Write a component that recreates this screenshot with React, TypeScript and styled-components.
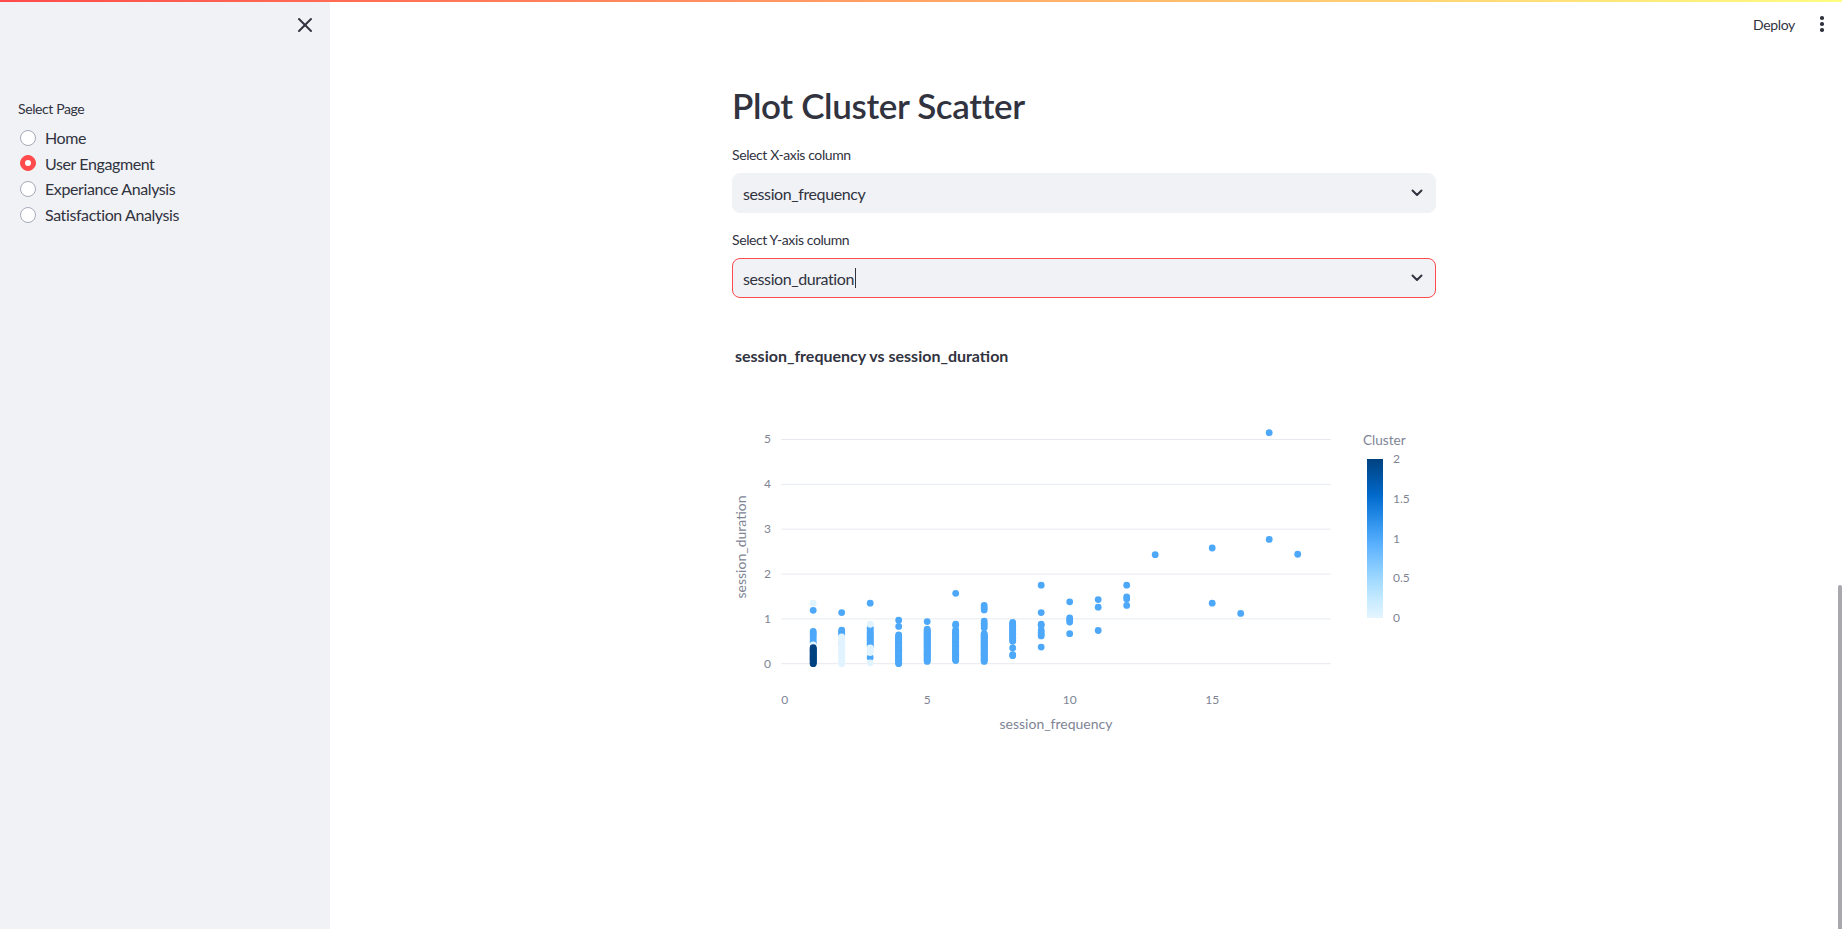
import React from "react";
import styled, { createGlobalStyle } from "styled-components";
import { X } from "lucide-react";

const FONT = `"Source Sans Pro", "Lato", "Noto Sans", sans-serif`;
const TEXT = "#31333f";
const MUTED = "#808495";
const GRID = "#e6eaf1";

const GlobalStyle = createGlobalStyle`
  html, body {
    margin: 0;
    padding: 0;
    background: #ffffff;
    font-family: ${FONT};
    color: ${TEXT};
    letter-spacing: -0.025em;
    overflow: hidden;
  }
  * {
    box-sizing: border-box;
  }
`;

const Page = styled.div`
  display: flex;
  flex-direction: column;
  width: 100vw;
  height: 100vh;
`;

const TopDecoration = styled.div`
  height: 2px;
  flex: 0 0 2px;
  background: linear-gradient(90deg, rgb(255, 75, 75), rgb(255, 253, 128));
`;

const Body = styled.div`
  flex: 1;
  display: flex;
  min-height: 0;
`;

const Sidebar = styled.aside`
  width: 330px;
  flex: 0 0 330px;
  background: #f0f2f6;
  display: flex;
  flex-direction: column;
  padding: 11px 13px 0 18px;
`;

const SidebarHeader = styled.div`
  display: flex;
  justify-content: flex-end;
  height: 24px;
`;

const CloseButton = styled.button`
  display: flex;
  align-items: center;
  justify-content: center;
  width: 24px;
  height: 24px;
  padding: 0;
  border: none;
  background: transparent;
  color: ${TEXT};
  cursor: pointer;
`;

const SidebarLabel = styled.div`
  margin-top: 61px;
  font-size: 14px;
  line-height: 22px;
  color: ${TEXT};
`;

const RadioList = styled.div`
  display: flex;
  flex-direction: column;
  margin-top: 5px;
`;

const RadioRow = styled.label`
  display: flex;
  align-items: center;
  height: 25.6px;
  gap: 9px;
  padding-left: 2px;
  font-size: 16px;
  color: ${TEXT};
  cursor: pointer;
`;

const RadioCircle = styled.span<{ $checked?: boolean }>`
  position: relative;
  width: 16px;
  height: 16px;
  flex: 0 0 16px;
  border-radius: 50%;
  background: ${({ $checked }) => ($checked ? "#ff4b4b" : "#ffffff")};
  border: 1px solid ${({ $checked }) => ($checked ? "#ff4b4b" : "#a6aab8")};

  &::after {
    content: "";
    display: ${({ $checked }) => ($checked ? "block" : "none")};
    position: absolute;
    left: 50%;
    top: 50%;
    width: 6px;
    height: 6px;
    margin: -3px 0 0 -3px;
    border-radius: 50%;
    background: #ffffff;
  }
`;

const Main = styled.main`
  position: relative;
  flex: 1;
  display: flex;
  flex-direction: column;
  padding-right: 4px;
`;

const MainHeader = styled.header`
  height: 44px;
  display: flex;
  align-items: center;
  justify-content: flex-end;
  gap: 23px;
  padding-right: 12px;
`;

const DeployButton = styled.button`
  border: none;
  background: transparent;
  padding: 0;
  font-family: ${FONT};
  font-size: 14px;
  letter-spacing: -0.025em;
  color: ${TEXT};
  cursor: pointer;
`;

const MenuButton = styled.button`
  display: flex;
  flex-direction: column;
  align-items: center;
  gap: 2.6px;
  width: 8px;
  border: none;
  background: transparent;
  padding: 0;
  cursor: pointer;

  span {
    width: 3.6px;
    height: 3.6px;
    border-radius: 50%;
    background: ${TEXT};
  }
`;

const Content = styled.section`
  width: 704px;
  margin: 0 auto;
  padding-top: 33px;
  display: flex;
  flex-direction: column;
`;

const Title = styled.h1`
  margin: 0 0 12px;
  font-size: 35px;
  line-height: 53px;
  font-weight: 600;
  letter-spacing: -0.01em;
  color: ${TEXT};
`;

const Field = styled.div`
  display: flex;
  flex-direction: column;
  margin-bottom: 16px;
`;

const FieldLabel = styled.div`
  font-size: 14px;
  line-height: 22px;
  margin-bottom: 7px;
  color: ${TEXT};
`;

const SelectBox = styled.div<{ $focused?: boolean }>`
  height: 40px;
  display: flex;
  align-items: center;
  justify-content: space-between;
  padding: 0 12px 0 10px;
  background: #f0f2f6;
  border-radius: 8px;
  border: 1px solid ${({ $focused }) => ($focused ? "#ff4b4b" : "#f0f2f6")};
  font-size: 16px;
  color: ${TEXT};
`;

const SelectValue = styled.span`
  display: flex;
  align-items: center;
`;

const Cursor = styled.span`
  display: inline-block;
  width: 1px;
  height: 20px;
  margin-left: 1px;
  background: ${TEXT};
`;

const ChartFrame = styled.div`
  width: 704px;
  height: 450px;
  letter-spacing: 0;
`;

const ScrollThumb = styled.div`
  position: absolute;
  right: 0;
  top: 583px;
  bottom: 0;
  width: 4px;
  border-radius: 2px 2px 0 0;
  background: #a8a8ad;
`;

function Chevron() {
  return (
    <svg width="12" height="8" viewBox="0 0 12 8">
      <path d="M1.5 1.5 L6 6 L10.5 1.5" fill="none" stroke={TEXT} strokeWidth="2" strokeLinecap="round" strokeLinejoin="round" />
    </svg>
  );
}

type Pt = { x: number; y: number; c: 0 | 1 | 2 };

function span(a: number, b: number, step: number): number[] {
  const out: number[] = [];
  for (let v = a; v <= b + 1e-9; v += step) out.push(+v.toFixed(3));
  return out;
}

function buildPoints(): Pt[] {
  const pts: Pt[] = [];
  const add = (x: number, ys: number[], c: 0 | 1 | 2) => ys.forEach((y) => pts.push({ x, y, c }));
  // x = 1
  add(1, [1.19, 0.72, 0.68, 0.64, 0.6, 0.55, 0.5, 0.46], 1);
  add(1, [1.35, 0.42], 0);
  add(1, span(0, 0.37, 0.02), 2);
  // x = 2
  add(2, [1.14, 0.75, 0.72, 0.68, 0.65, 0.46], 1);
  add(2, span(0, 0.6, 0.04), 0);
  // x = 3
  add(3, [1.35, 0.8, 0.78, ...span(0.4, 0.74, 0.03), 0.14], 1);
  add(3, [0.88, 0.35, 0.3, 0.25, 0.02], 0);
  // x = 4 .. 8
  add(4, [0.97, 0.83, ...span(0, 0.65, 0.02)], 1);
  add(5, [0.94, ...span(0.05, 0.77, 0.02)], 1);
  add(6, [1.57, 0.88, 0.85, ...span(0.07, 0.75, 0.02)], 1);
  add(7, [1.3, 1.25, 1.2, 0.95, 0.9, 0.85, 0.8, ...span(0.05, 0.68, 0.02)], 1);
  add(8, [...span(0.5, 0.93, 0.03), 0.35, 0.2, 0.18], 1);
  // x = 9 .. 18
  add(9, [1.75, 1.14, 0.88, 0.85, 0.75, 0.7, 0.65, 0.62, 0.37], 1);
  add(10, [1.38, 1.02, 0.98, 0.93, 0.67], 1);
  add(11, [1.43, 1.26, 0.74], 1);
  add(12, [1.75, 1.49, 1.44, 1.3], 1);
  add(13, [2.43], 1);
  add(15, [2.58, 1.35], 1);
  add(16, [1.12], 1);
  add(17, [5.15, 2.77], 1);
  add(18, [2.44], 1);
  return pts;
}

const POINTS = buildPoints();
const CLUSTER_COLORS = ["#e1f3ff", "#4ea8f9", "#004280"];
const SCALE = ["#e4f5ff", "#c7ebff", "#a6dcff", "#83c9ff", "#60b4ff", "#3d9df3", "#1c83e1", "#0068c9", "#0054a3", "#004280"];

const px = (v: number) => 52.7 + 28.5 * v;
const py = (v: number) => 349.7 - 44.85 * v;

function ScatterChart() {
  const yTicks = [0, 1, 2, 3, 4, 5];
  const xTicks = [0, 5, 10, 15];
  const barTop = 145;
  const barBottom = 304;
  const cbTicks = ["2", "1.5", "1", "0.5", "0"];
  return (
    <svg width="704" height="450" style={{ display: "block", fontFamily: FONT }}>
      <defs>
        <linearGradient id="cb" x1="0" y1="1" x2="0" y2="0">
          {SCALE.map((c, i) => (
            <stop key={c} offset={i / (SCALE.length - 1)} stopColor={c} />
          ))}
        </linearGradient>
      </defs>
      <text x="3" y="48" fontSize="16" fontWeight="700" fill={TEXT}>
        session_frequency vs session_duration
      </text>
      {yTicks.map((t) => (
        <g key={t}>
          <line x1="49" x2="599" y1={py(t)} y2={py(t)} stroke={GRID} strokeWidth="1" />
          <text x="39" y={py(t) + 4} fontSize="12" fill={MUTED} textAnchor="end">
            {t}
          </text>
        </g>
      ))}
      {xTicks.map((t) => (
        <text key={t} x={px(t)} y="390" fontSize="12" fill={MUTED} textAnchor="middle">
          {t}
        </text>
      ))}
      <text x="324" y="415" fontSize="14" fill={MUTED} textAnchor="middle">
        session_frequency
      </text>
      <text x="14" y="233" fontSize="14" fill={MUTED} textAnchor="middle" transform="rotate(-90 14 233)">
        session_duration
      </text>
      {POINTS.map((p, i) => (
        <circle key={i} cx={px(p.x)} cy={py(p.y)} r="3.4" fill={CLUSTER_COLORS[p.c]} />
      ))}
      <text x="631" y="131" fontSize="13.6" fill={MUTED}>
        Cluster
      </text>
      <rect x="635" y={barTop} width="16" height={barBottom - barTop} fill="url(#cb)" />
      {cbTicks.map((t, i) => (
        <text key={t} x="661" y={barTop + ((barBottom - barTop) / 4) * i + 4} fontSize="12" fill={MUTED}>
          {t}
        </text>
      ))}
    </svg>
  );
}

const PAGES = ["Home", "User Engagment", "Experiance Analysis", "Satisfaction Analysis"];

export default function App() {
  return (
    <Page>
      <GlobalStyle />
      <TopDecoration />
      <Body>
        <Sidebar>
          <SidebarHeader>
            <CloseButton aria-label="Close sidebar">
              <X size={24} strokeWidth={2} />
            </CloseButton>
          </SidebarHeader>
          <SidebarLabel>Select Page</SidebarLabel>
          <RadioList>
            {PAGES.map((p) => (
              <RadioRow key={p}>
                <RadioCircle $checked={p === "User Engagment"} />
                {p}
              </RadioRow>
            ))}
          </RadioList>
        </Sidebar>
        <Main>
          <MainHeader>
            <DeployButton>Deploy</DeployButton>
            <MenuButton aria-label="Main menu">
              <span />
              <span />
              <span />
            </MenuButton>
          </MainHeader>
          <Content>
            <Title>Plot Cluster Scatter</Title>
            <Field>
              <FieldLabel>Select X-axis column</FieldLabel>
              <SelectBox>
                <SelectValue>session_frequency</SelectValue>
                <Chevron />
              </SelectBox>
            </Field>
            <Field>
              <FieldLabel>Select Y-axis column</FieldLabel>
              <SelectBox $focused>
                <SelectValue>
                  session_duration
                  <Cursor />
                </SelectValue>
                <Chevron />
              </SelectBox>
            </Field>
            <ChartFrame>
              <ScatterChart />
            </ChartFrame>
          </Content>
          <ScrollThumb />
        </Main>
      </Body>
    </Page>
  );
}
